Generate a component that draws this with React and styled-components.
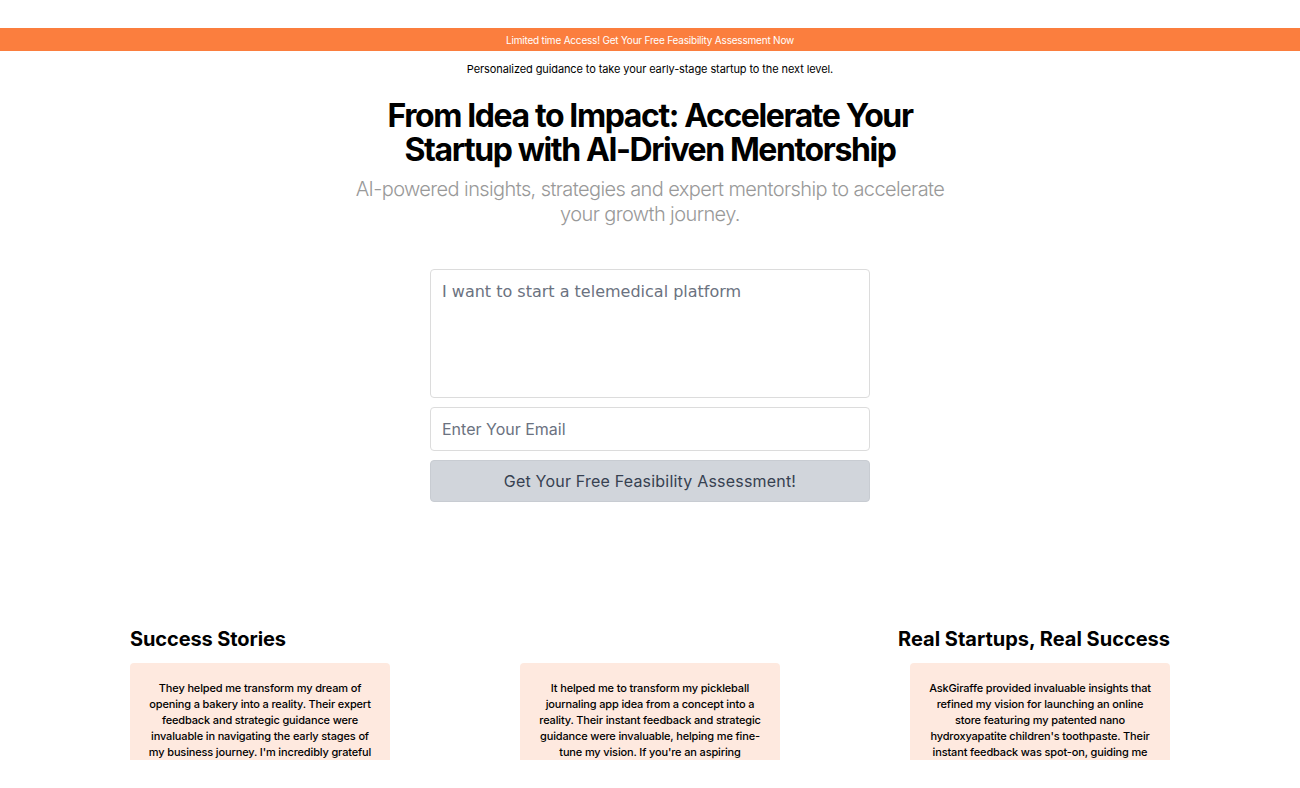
import styled, { createGlobalStyle } from "styled-components";

const GlobalStyle = createGlobalStyle`
  * { box-sizing: border-box; }
  body {
    margin: 0;
    background: #ffffff;
    font-family: Inter, "Noto Sans", sans-serif;
    color: #000;
  }
`;

const stories = [
  "They helped me transform my dream of opening a bakery into a reality. Their expert feedback and strategic guidance were invaluable in navigating the early stages of my business journey. I'm incredibly grateful for their support and would recommend them to any founder.",
  "It helped me to transform my pickleball journaling app idea from a concept into a reality. Their instant feedback and strategic guidance were invaluable, helping me fine-tune my vision. If you're an aspiring entrepreneur, this is the place to start.",
  "AskGiraffe provided invaluable insights that refined my vision for launching an online store featuring my patented nano hydroxyapatite children's toothpaste. Their instant feedback was spot-on, guiding me through every step of the launch.",
];

export default function App() {
  return (
    <>
      <GlobalStyle />
      <Page>
        <Banner>Limited time Access! Get Your Free Feasibility Assessment Now</Banner>
        <Tagline>Personalized guidance to take your early-stage startup to the next level.</Tagline>
        <Hero>
          <Title>
            From Idea to Impact: Accelerate Your
            <br />
            Startup with AI-Driven Mentorship
          </Title>
          <Lead>
            AI-powered insights, strategies and expert mentorship to accelerate your growth journey.
          </Lead>
        </Hero>
        <Form onSubmit={(e) => e.preventDefault()}>
          <IdeaBox placeholder="I want to start a telemedical platform" />
          <EmailInput type="email" placeholder="Enter Your Email" />
          <SubmitButton type="submit">Get Your Free Feasibility Assessment!</SubmitButton>
        </Form>
        <Stories>
          <StoriesHead>
            <SectionTitle>Success Stories</SectionTitle>
            <SectionTitle $wide>Real Startups, Real Success</SectionTitle>
          </StoriesHead>
          <CardRow>
            {stories.map((s, i) => (
              <Card key={i}>{s}</Card>
            ))}
          </CardRow>
        </Stories>
      </Page>
    </>
  );
}

const Page = styled.div`
  height: 760px;
  overflow: hidden;
  padding-top: 28px;
`;

const Banner = styled.div`
  background: #fb7e3e;
  color: #fff;
  height: 23px;
  display: flex;
  align-items: center;
  justify-content: center;
  font-size: 10px;
  letter-spacing: -0.2px;
`;

const Tagline = styled.p`
  margin: 11px 0 0;
  text-align: center;
  font-size: 11px;
  line-height: 14px;
  letter-spacing: -0.1px;
`;

const Hero = styled.div`
  margin-top: 23px;
  text-align: center;
`;

const Title = styled.h1`
  margin: 0;
  font-size: 32px;
  line-height: 34px;
  font-weight: 700;
  letter-spacing: -1.4px;
`;

const Lead = styled.p`
  margin: 10px auto 0;
  max-width: 610px;
  font-size: 20px;
  line-height: 25px;
  font-weight: 300;
  color: #999;
  letter-spacing: -0.6px;
`;

const Form = styled.form`
  width: 440px;
  margin: 42px auto 0;
  display: flex;
  flex-direction: column;
  gap: 9px;
`;

const IdeaBox = styled.textarea`
  height: 129px;
  resize: none;
  border: 1px solid #dcdcdc;
  border-radius: 4px;
  padding: 11px 11px;
  font-family: "DejaVu Sans", sans-serif;
  font-size: 16px;
  line-height: 22px;
  &::placeholder {
    color: #6b7280;
  }
`;

const EmailInput = styled.input`
  height: 44px;
  border: 1px solid #dcdcdc;
  border-radius: 4px;
  padding: 0 11px;
  font-family: Inter, sans-serif;
  font-size: 16px;
  &::placeholder {
    color: #6b7280;
  }
`;

const SubmitButton = styled.button`
  height: 42px;
  border: 1px solid #c8ccd2;
  border-radius: 4px;
  background: #d1d5db;
  color: #374151;
  font-family: Inter, sans-serif;
  font-size: 16px;
  letter-spacing: 0.2px;
`;

const Stories = styled.section`
  width: 1040px;
  margin: 124px auto 0;
`;

const StoriesHead = styled.div`
  display: flex;
  justify-content: space-between;
`;

const SectionTitle = styled.h2`
  margin: 0;
  font-size: 20px;
  line-height: 26px;
  font-weight: 700;
  letter-spacing: ${(p) => (p.$wide ? "0" : "-0.1px")};
`;

const CardRow = styled.div`
  margin-top: 11px;
  display: flex;
  justify-content: space-between;
`;

const Card = styled.div`
  width: 260px;
  background: #fee9df;
  border-radius: 4px;
  padding: 17px 18px;
  text-align: center;
  font-size: 11px;
  line-height: 16px;
  font-weight: 500;
  letter-spacing: -0.15px;
`;
